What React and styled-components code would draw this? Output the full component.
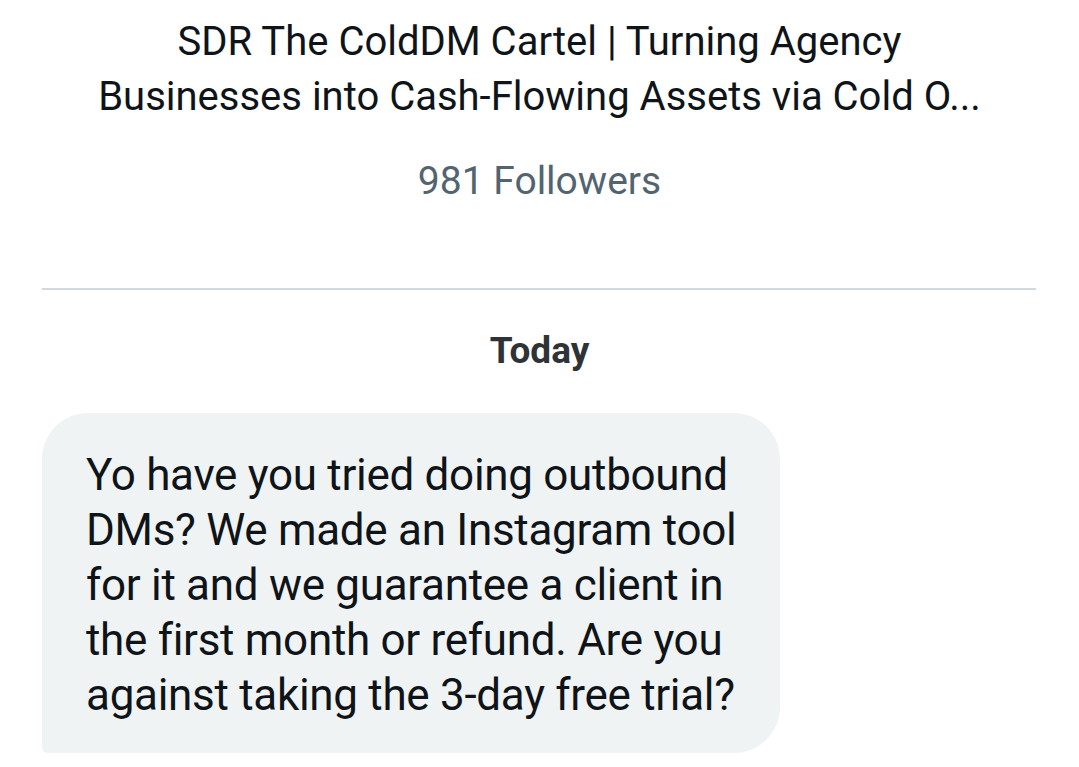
import React from 'react'
import styled, { createGlobalStyle } from 'styled-components'

const GlobalStyle = createGlobalStyle`
  html, body {
    margin: 0;
    padding: 0;
    background: #ffffff;
  }
  body {
    font-family: Roboto, "Liberation Sans", Arial, sans-serif;
    color: #0f1419;
  }
`

const Page = styled.div`
  width: 1079px;
  height: 767px;
  overflow: hidden;
  display: flex;
  flex-direction: column;
`

const Profile = styled.div`
  display: flex;
  flex-direction: column;
  align-items: center;
  padding-top: 14px;
`

const Bio = styled.div`
  width: 905px;
  font-size: 40px;
  line-height: 55px;
  text-align: center;
  color: #0f1419;
`

const Followers = styled.div`
  margin-top: 30px;
  font-size: 39px;
  line-height: 54px;
  color: #536471;
`

const Divider = styled.hr`
  border: 0;
  height: 2px;
  background: #cfd9de;
  margin: 80px 43px 0 42px;
`

const DayLabel = styled.div`
  margin-top: 39px;
  text-align: center;
  font-size: 37px;
  font-weight: 700;
  line-height: 44px;
  color: #2f3336;
`

const Thread = styled.div`
  display: flex;
  flex-direction: column;
  padding: 40px 42px 0;
`

const Bubble = styled.div`
  align-self: flex-start;
  width: 738px;
  box-sizing: border-box;
  padding: 35px 34px 30px 44px;
  background: #eff3f4;
  border-radius: 46px 46px 46px 6px;
  font-size: 44px;
  line-height: 55px;
  letter-spacing: -0.3px;
  color: #0f1419;
`

export default function App() {
  return (
    <Page>
      <GlobalStyle />
      <Profile>
        <Bio>
          SDR The ColdDM Cartel | Turning Agency Businesses into Cash-Flowing Assets via Cold O...
        </Bio>
        <Followers>981 Followers</Followers>
      </Profile>
      <Divider />
      <DayLabel>Today</DayLabel>
      <Thread>
        <Bubble>
          Yo have you tried doing outbound DMs? We made an Instagram tool for it and we guarantee a
          client in the first month or refund. Are you against taking the 3-day free trial?
        </Bubble>
      </Thread>
    </Page>
  )
}
